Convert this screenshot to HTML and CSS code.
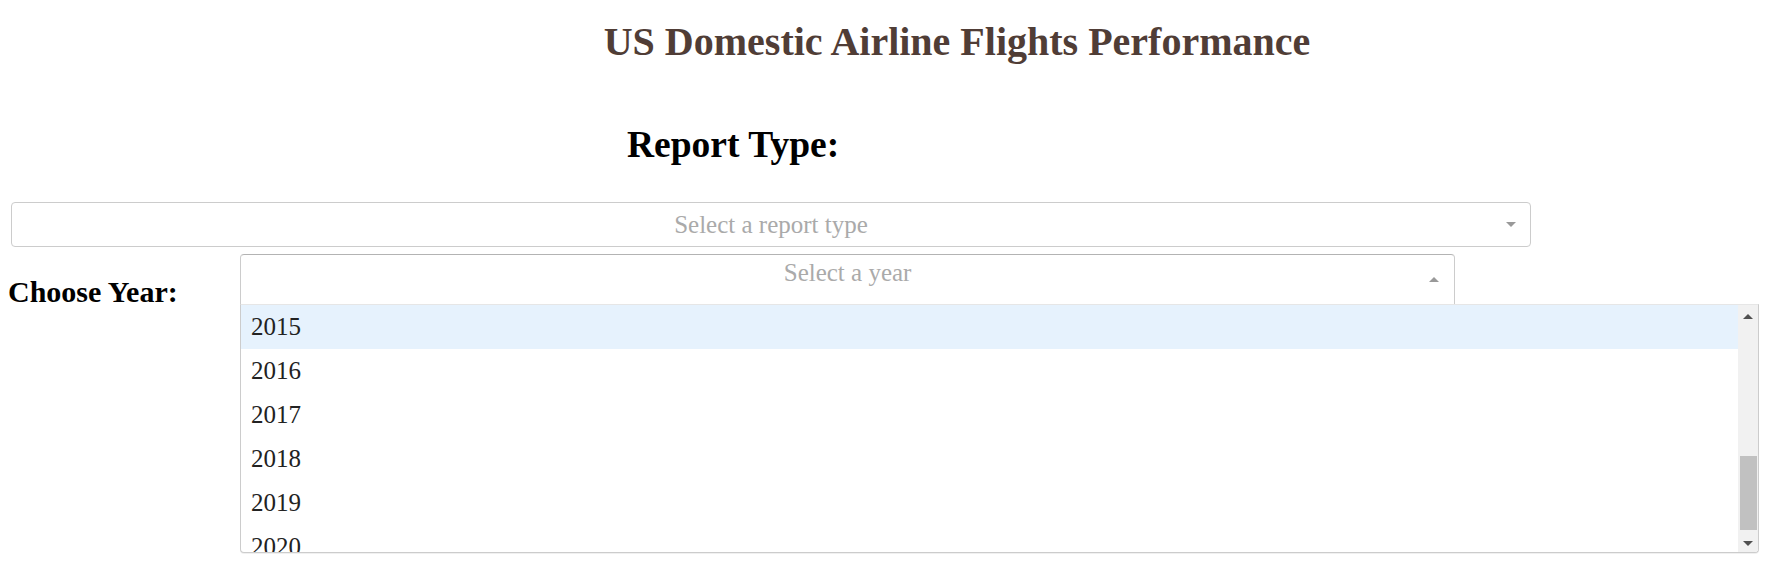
FILE: index.html
```html
<!DOCTYPE html>
<html lang="en">
<head>
<meta charset="utf-8">
<title>US Domestic Airline Flights Performance</title>
<link rel="stylesheet" href="styles.css">
</head>
<body>
<div class="app">
  <h1 class="title">US Domestic Airline Flights Performance</h1>

  <div class="report-block">
    <h2 class="report-label">Report Type:</h2>
    <div class="select select-report">
      <div class="select-control">
        <span class="spacer"></span>
        <span class="placeholder">Select a report type</span>
        <span class="arrow-cell"><span class="arrow arrow-down"></span></span>
      </div>
    </div>
  </div>

  <div class="year-row">
    <h2 class="year-label">Choose Year:</h2>
    <div class="select select-year">
      <div class="select-control open">
        <span class="spacer"></span>
        <span class="placeholder">Select a year</span>
        <span class="arrow-cell"><span class="arrow arrow-up"></span></span>
      </div>
      <div class="select-menu">
        <div class="options">
          <div class="option focused">2015</div>
          <div class="option">2016</div>
          <div class="option">2017</div>
          <div class="option">2018</div>
          <div class="option">2019</div>
          <div class="option">2020</div>
        </div>
        <div class="scrollbar">
          <div class="sb-btn"><span class="sb-arrow sb-up"></span></div>
          <div class="sb-track"><div class="sb-thumb"></div></div>
          <div class="sb-btn"><span class="sb-arrow sb-down"></span></div>
        </div>
      </div>
    </div>
  </div>
</div>
</body>
</html>
```

FILE: styles.css
```css
* {
  box-sizing: border-box;
}

html {
  height: 100%;
}

body {
  margin: 0;
  min-height: 100vh;
  background: #ffffff;
  font-family: "Liberation Serif", "Times New Roman", serif;
  color: #000;
}

.app {
  min-height: 581px;
}

.title {
  margin: 0;
  padding: 20px 0 0 126px;
  font-size: 40px;
  line-height: 44px;
  font-weight: bold;
  color: #503D36;
  text-align: center;
}

.report-label {
  margin: 0;
  padding: 60px 0 0 627px;
  font-size: 37.5px;
  line-height: 42px;
  font-weight: bold;
}

.select-report {
  margin: 36px 0 0 11px;
  width: 1520px;
}

.select-control {
  display: grid;
  grid-template-columns: 1fr auto 1fr;
  align-items: center;
  height: 45px;
  border: 1px solid #ccc;
  border-radius: 4px;
  background: #fff;
}

.placeholder {
  font-size: 25px;
  color: #aaa;
  white-space: nowrap;
}

.arrow-cell {
  display: flex;
  justify-content: flex-end;
  align-items: center;
}

.arrow {
  width: 0;
  height: 0;
  border-left: 5px solid transparent;
  border-right: 5px solid transparent;
}

.arrow-down {
  border-top: 5px solid #999;
  margin-right: 14px;
}

.arrow-up {
  border-bottom: 5px solid #999;
  margin-right: 15px;
}

.year-row {
  display: flex;
  align-items: flex-start;
  margin-top: 7px;
}

.year-label {
  margin: 0;
  width: 240px;
  flex: none;
  padding: 21px 0 0 8px;
  font-size: 30px;
  line-height: 33px;
  font-weight: bold;
}

.select-year {
  position: relative;
  width: 1519px;
  flex: none;
}

.select-control.open {
  width: 80%;
  height: 50px;
  border-color: #b3b3b3 #ccc transparent;
  border-bottom: none;
  border-radius: 4px 4px 0 0;
}

.select-control.open .placeholder {
  align-self: start;
  padding-top: 4px;
}

.select-menu {
  position: absolute;
  top: 100%;
  left: 0;
  z-index: 10;
  width: 100%;
  height: 249px;
  display: flex;
  background: #fff;
  border: 1px solid #ccc;
  border-top-color: #e6e6e6;
  border-radius: 0 0 4px 4px;
  box-shadow: 0 1px 0 rgba(0, 0, 0, 0.06);
  overflow: hidden;
}

.options {
  flex: 1;
  overflow: hidden;
}

.option {
  height: 44px;
  padding-left: 10px;
  font-size: 25px;
  line-height: 44px;
  color: #222;
}

.option.focused {
  background: #e6f2fd;
}

.scrollbar {
  width: 20px;
  flex: none;
  display: flex;
  flex-direction: column;
  background: #f1f1f1;
}

.sb-btn {
  height: 20px;
  display: flex;
  justify-content: center;
  padding-top: 9px;
}

.sb-arrow {
  width: 0;
  height: 0;
  border-left: 5px solid transparent;
  border-right: 5px solid transparent;
}

.sb-up {
  border-bottom: 5px solid #505050;
}

.sb-down {
  border-top: 5px solid #505050;
}

.sb-track {
  flex: 1;
}

.sb-thumb {
  margin: 131px 1px 0 2px;
  height: 74px;
  background: #c1c1c1;
}
```
